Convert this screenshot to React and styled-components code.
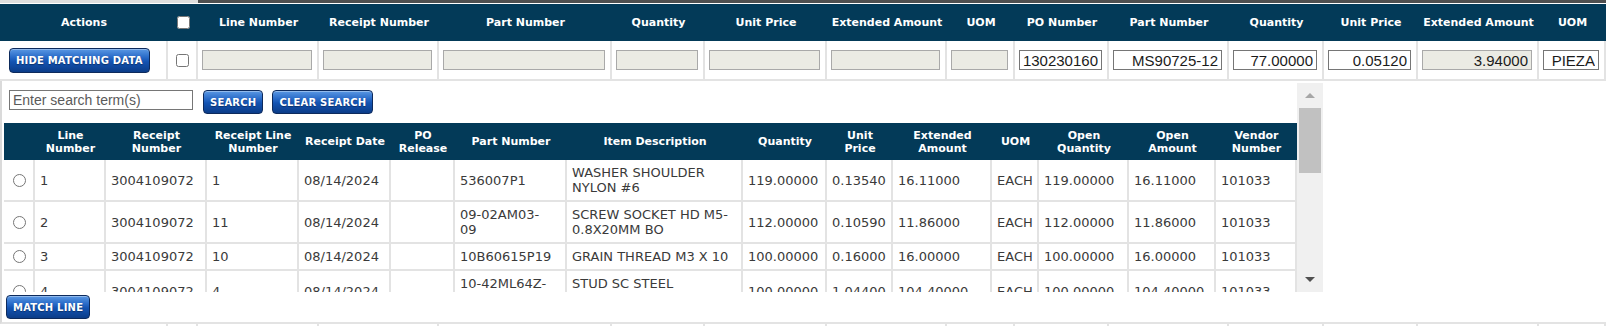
import React from "react";
import styled, { createGlobalStyle } from "styled-components";

const NAVY = "#033a58";
const LINE = "#e3e3e3";

const GlobalStyle = createGlobalStyle`
  html, body { margin: 0; padding: 0; background: #fff; overflow: hidden; }
  body { font-family: "DejaVu Sans", Verdana, sans-serif; }
  *, *::before, *::after { box-sizing: border-box; }
`;

const outerCols = [168, 30, 121, 120, 173, 93, 122, 120, 68, 94, 120, 95, 94, 121, 67];
const innerCols = [31, 71, 101, 92, 92, 64, 112, 176, 84, 66, 99, 47, 90, 87, 81];
const tpl = (cols) => cols.map((w) => `${w}px`).join(" ");

const Page = styled.div`
  width: 1612px;
`;

const TopEdge = styled.div`
  display: flex;
  width: 1606px;
  height: 3px;
  margin-bottom: 1px;
`;

const EdgeSegment = styled.div`
  flex: ${(p) => (p.$dark ? "1 1 auto" : "0 0 198px")};
  background: ${(p) => (p.$dark ? "#4f4f4f" : "#dedede")};
`;

const Grid = styled.div`
  width: 1606px;
`;

const GridRow = styled.div`
  display: grid;
  grid-template-columns: ${tpl(outerCols)};
`;

const HeadCell = styled.div`
  height: 37px;
  background: ${NAVY};
  color: #fff;
  font: bold 11px "DejaVu Sans", Verdana, sans-serif;
  display: flex;
  align-items: center;
  justify-content: center;
  text-align: center;
  white-space: nowrap;
`;

const BodyCell = styled.div`
  height: 40px;
  border-right: 2px solid ${LINE};
  border-bottom: 2px solid ${LINE};
  display: flex;
  align-items: center;
  justify-content: ${(p) => p.$justify || "stretch"};
  padding: ${(p) => p.$pad || "0 4px 0 4px"};
`;

const Check = styled.input.attrs({ type: "checkbox" })`
  margin: 0;
  width: 13px;
  height: 13px;
`;

const CellInput = styled.input`
  width: 100%;
  height: 20px;
  margin: 0;
  border: 1px solid ${(p) => (p.$muted ? "#a9a9a9" : "#767676")};
  background: ${(p) => (p.$muted ? "#ebebe4" : "#fff")};
  color: #1b1b1b;
  text-align: right;
  font: 15px "Liberation Sans", Arial, sans-serif;
  padding: 0 3px 0 1px;
  outline: none;
`;

const ActionButton = styled.button`
  height: ${(p) => (p.$tall ? "25px" : "24px")};
  margin: 0;
  padding: 0 6px;
  border: 1px solid #0d2a5c;
  border-radius: 4px;
  background: linear-gradient(to bottom, #5a98e4 0%, #2a6bc8 35%, #1353b2 55%, #0b3c88 100%);
  box-shadow: inset 0 1px 0 rgba(255, 255, 255, 0.35);
  color: #fff;
  font: bold 10px "DejaVu Sans", Verdana, sans-serif;
  letter-spacing: 0.2px;
  text-shadow: 0 1px 1px rgba(0, 0, 0, 0.35);
  white-space: nowrap;
  cursor: pointer;
`;

const SpanRow = styled.div`
  border-left: 2px solid #dadada;
  border-bottom: 2px solid ${LINE};
  padding: 2px 0 3px 2px;
  display: flex;
  flex-direction: column;
  align-items: flex-start;
  gap: 3px;
`;

const ScrollPanel = styled.div`
  display: flex;
  height: 209px;
  width: 1319px;
`;

const ScrollContent = styled.div`
  flex: 0 0 1293px;
  overflow: hidden;
`;

const SearchBar = styled.div`
  display: flex;
  align-items: flex-start;
  gap: 9px;
  height: 40px;
  padding: 7px 0 0 5px;
`;

const SearchInput = styled.input`
  width: 184px;
  height: 20px;
  margin: 0 1px 0 0;
  border: 1px solid #767676;
  padding: 0 3px;
  font: 14px "Liberation Sans", Arial, sans-serif;
  color: #222;
  outline: none;
  &::placeholder {
    color: #5a5a5a;
  }
`;

const InnerRow = styled.div`
  display: grid;
  grid-template-columns: ${tpl(innerCols)};
`;

const InnerHead = styled.div`
  height: 37px;
  background: ${NAVY};
  color: #fff;
  font: bold 11px/13px "DejaVu Sans", Verdana, sans-serif;
  white-space: pre-line;
  display: flex;
  align-items: center;
  justify-content: center;
  text-align: center;
`;

const InnerCell = styled.div`
  border-right: 2px solid ${LINE};
  border-bottom: 2px solid ${LINE};
  padding: 5px 3px 5px 5px;
  font: 13px/15px "DejaVu Sans", Verdana, sans-serif;
  color: #3a3a3a;
  white-space: pre-line;
  display: flex;
  align-items: center;
  justify-content: ${(p) => (p.$center ? "center" : "flex-start")};
`;

const Radio = styled.input.attrs({ type: "radio" })`
  margin: 0;
  width: 13px;
  height: 13px;
`;

const ScrollTrack = styled.div`
  flex: 0 0 26px;
  background: #f0f0f0;
  display: flex;
  flex-direction: column;
`;

const ScrollArrow = styled.div`
  height: 25px;
  display: flex;
  align-items: center;
  justify-content: center;
  &::after {
    content: "";
    width: 0;
    height: 0;
    border-left: 5px solid transparent;
    border-right: 5px solid transparent;
    ${(p) =>
      p.$up
        ? `border-bottom: 5px solid #a6a6a6;`
        : `border-top: 5px solid #505050;`}
  }
`;

const ScrollThumb = styled.div`
  height: 65px;
  margin: 0 2px;
  background: #c1c1c1;
`;

const ScrollSpacer = styled.div`
  flex: 1;
`;

const MatchButton = styled(ActionButton)`
  margin-left: 2px;
`;

const outerHeads = [
  "Actions", null, "Line Number", "Receipt Number", "Part Number", "Quantity",
  "Unit Price", "Extended Amount", "UOM", "PO Number", "Part Number",
  "Quantity", "Unit Price", "Extended Amount", "UOM",
];

const entryValues = [
  { v: "", muted: true }, { v: "", muted: true }, { v: "", muted: true },
  { v: "", muted: true }, { v: "", muted: true }, { v: "", muted: true },
  { v: "", muted: true },
  { v: "130230160" }, { v: "MS90725-12" }, { v: "77.00000" }, { v: "0.05120" },
  { v: "3.94000", muted: true }, { v: "PIEZA" },
];

const innerHeads = [
  "", "Line\nNumber", "Receipt\nNumber", "Receipt Line\nNumber", "Receipt Date",
  "PO\nRelease", "Part Number", "Item Description", "Quantity", "Unit\nPrice",
  "Extended\nAmount", "UOM", "Open\nQuantity", "Open\nAmount", "Vendor\nNumber",
];

const receipts = [
  ["1", "3004109072", "1", "08/14/2024", "", "536007P1", "WASHER SHOULDER\nNYLON #6", "119.00000", "0.13540", "16.11000", "EACH", "119.00000", "16.11000", "101033"],
  ["2", "3004109072", "11", "08/14/2024", "", "09-02AM03-\n09", "SCREW SOCKET HD M5-\n0.8X20MM BO", "112.00000", "0.10590", "11.86000", "EACH", "112.00000", "11.86000", "101033"],
  ["3", "3004109072", "10", "08/14/2024", "", "10B60615P19", "GRAIN THREAD M3 X 10", "100.00000", "0.16000", "16.00000", "EACH", "100.00000", "16.00000", "101033"],
  ["4", "3004109072", "4", "08/14/2024", "", "10-42ML64Z-\n01", "STUD SC STEEL\nM4X10", "100.00000", "1.04400", "104.40000", "EACH", "100.00000", "104.40000", "101033"],
];

export default function App() {
  return (
    <Page>
      <GlobalStyle />
      <TopEdge>
        <EdgeSegment />
        <EdgeSegment $dark />
      </TopEdge>
      <Grid>
        <GridRow>
          {outerHeads.map((h, i) => (
            <HeadCell key={i}>{h === null ? <Check readOnly /> : h}</HeadCell>
          ))}
        </GridRow>
        <GridRow>
          <BodyCell $justify="flex-start" $pad="0 0 0 9px">
            <ActionButton $tall>HIDE MATCHING DATA</ActionButton>
          </BodyCell>
          <BodyCell $justify="center" $pad="0">
            <Check readOnly />
          </BodyCell>
          {entryValues.map((e, i) => (
            <BodyCell key={i} $pad="0 5px 0 4px">
              <CellInput $muted={e.muted} value={e.v} readOnly />
            </BodyCell>
          ))}
        </GridRow>
        <SpanRow>
          <ScrollPanel>
            <ScrollContent>
              <SearchBar>
                <SearchInput placeholder="Enter search term(s)" />
                <ActionButton>SEARCH</ActionButton>
                <ActionButton>CLEAR SEARCH</ActionButton>
              </SearchBar>
              <InnerRow>
                {innerHeads.map((h, i) => (
                  <InnerHead key={i}>{h}</InnerHead>
                ))}
              </InnerRow>
              {receipts.map((r, ri) => (
                <InnerRow key={ri}>
                  <InnerCell $center>
                    <Radio name="receipt" />
                  </InnerCell>
                  {r.map((c, ci) => (
                    <InnerCell key={ci}>{c}</InnerCell>
                  ))}
                </InnerRow>
              ))}
            </ScrollContent>
            <ScrollTrack>
              <ScrollArrow $up />
              <ScrollThumb />
              <ScrollSpacer />
              <ScrollArrow />
            </ScrollTrack>
          </ScrollPanel>
          <MatchButton>MATCH LINE</MatchButton>
        </SpanRow>
        <GridRow>
          {outerCols.map((_, i) => (
            <BodyCell key={i} />
          ))}
        </GridRow>
      </Grid>
    </Page>
  );
}
